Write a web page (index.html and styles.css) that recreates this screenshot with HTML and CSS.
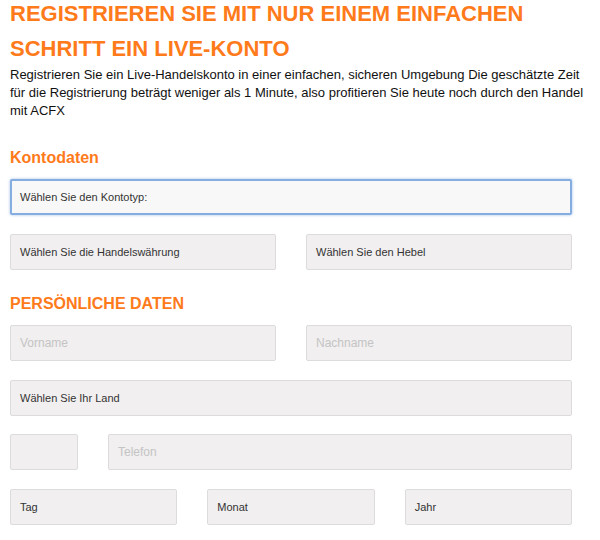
FILE: index.html
```html
<!DOCTYPE html>
<html lang="de">
<head>
  <meta charset="UTF-8" />
  <meta name="viewport" content="width=device-width, initial-scale=1.0"/>
  <title>Live-Konto eröffnen</title>
  <link rel="stylesheet" href="styles.css">
</head>
<body>
  <div class="page-container">
    <h1>Registrieren Sie mit nur einem einfachen Schritt ein Live-Konto</h1>
    <p class="intro">Registrieren Sie ein Live-Handelskonto in einer einfachen, sicheren Umgebung Die geschätzte Zeit für die Registrierung beträgt weniger als 1 Minute, also profitieren Sie heute noch durch den Handel mit ACFX</p>

    <h3 class="section-title">Kontodaten</h3>

    <div class="form-row">
      <div class="field focused">Wählen Sie den Kontotyp:</div>
    </div>
    <div class="form-row">
      <div class="field">Wählen Sie die Handelswährung</div>
      <div class="field">Wählen Sie den Hebel</div>
    </div>

    <h3 class="section-title upper">Persönliche Daten</h3>

    <div class="form-row">
      <div class="field placeholder">Vorname</div>
      <div class="field placeholder">Nachname</div>
    </div>
    <div class="form-row">
      <div class="field">Wählen Sie Ihr Land</div>
    </div>
    <div class="form-row">
      <div class="field prefix"></div>
      <div class="field placeholder">Telefon</div>
    </div>
    <div class="form-row">
      <div class="field">Tag</div>
      <div class="field">Monat</div>
      <div class="field">Jahr</div>
    </div>
  </div>
</body>
</html>
```

FILE: styles.css
```css
body {
  margin: 0;
  padding: 0;
  font-family: "Liberation Sans", Arial, sans-serif;
  background: #fff;
  color: #111;
}

.page-container {
  width: 562px;
  padding: 0 10px;
}

h1 {
  margin: -4px 0 0;
  font-size: 22px;
  line-height: 35px;
  font-weight: bold;
  text-transform: uppercase;
  color: #ff7a1a;
}

.intro {
  margin: 0 -24px 0 0;
  font-size: 13px;
  line-height: 18px;
}

.section-title {
  margin: 28px 0 11px;
  font-size: 16px;
  line-height: 20px;
  color: #ff7a1a;
}

.section-title.upper {
  text-transform: uppercase;
  margin-top: 24.5px;
}

.form-row {
  display: flex;
  gap: 30px;
  margin-bottom: 18.5px;
}

.field {
  flex: 1;
  height: 36px;
  box-sizing: border-box;
  padding: 0 9px;
  display: flex;
  align-items: center;
  font-size: 11px;
  color: #333;
  background: #f1eff0;
  border: 1px solid #dcdcdc;
  border-radius: 2px;
}

.field.placeholder {
  color: #c4c4c4;
  font-size: 12px;
}

.field.focused {
  background: #f8f8f8;
  border: 2px solid #86ade0;
  padding: 0 8px;
  box-shadow: 0 0 3px rgba(100, 150, 220, 0.6);
}

.field.prefix {
  flex: 0 0 68px;
}
```
